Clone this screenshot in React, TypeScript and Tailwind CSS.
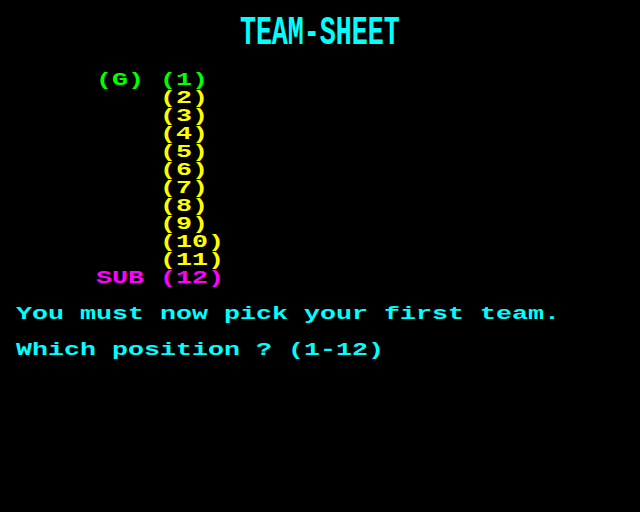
const lineClass =
  'h-[18px] whitespace-pre text-[18px] leading-[18px] font-bold origin-left scale-x-[1.4815]'

const players = ['(2)', '(3)', '(4)', '(5)', '(6)', '(7)', '(8)', '(9)', '(10)', '(11)']

export default function App() {
  return (
    <div
      className="flex h-[512px] w-[640px] flex-col overflow-hidden bg-black"
      style={{ fontFamily: '"Liberation Mono", "DejaVu Sans Mono", monospace' }}
    >
      <div className="mt-[13px] h-[41px] origin-left scale-x-[0.65] whitespace-pre text-[41px] font-bold leading-[41px] text-[#00ffff]">
        {'               TEAM-SHEET'}
      </div>

      <div className="mt-[17px] flex flex-col">
        <div className={lineClass}>
          <span className="text-[#00ff00]">{'      (G) (1)'}</span>
        </div>
        {players.map((p) => (
          <div key={p} className={`${lineClass} text-[#ffff00]`}>
            {'          ' + p}
          </div>
        ))}
        <div className={lineClass}>
          <span className="text-[#ff00ff]">{'      SUB (12)'}</span>
        </div>
        <div className="h-[18px]" />
        <div className={`${lineClass} text-[#00ffff]`}>{' You must now pick your first team.'}</div>
        <div className="h-[18px]" />
        <div className={`${lineClass} text-[#00ffff]`}>{' Which position ? (1-12)'}</div>
      </div>
    </div>
  )
}
